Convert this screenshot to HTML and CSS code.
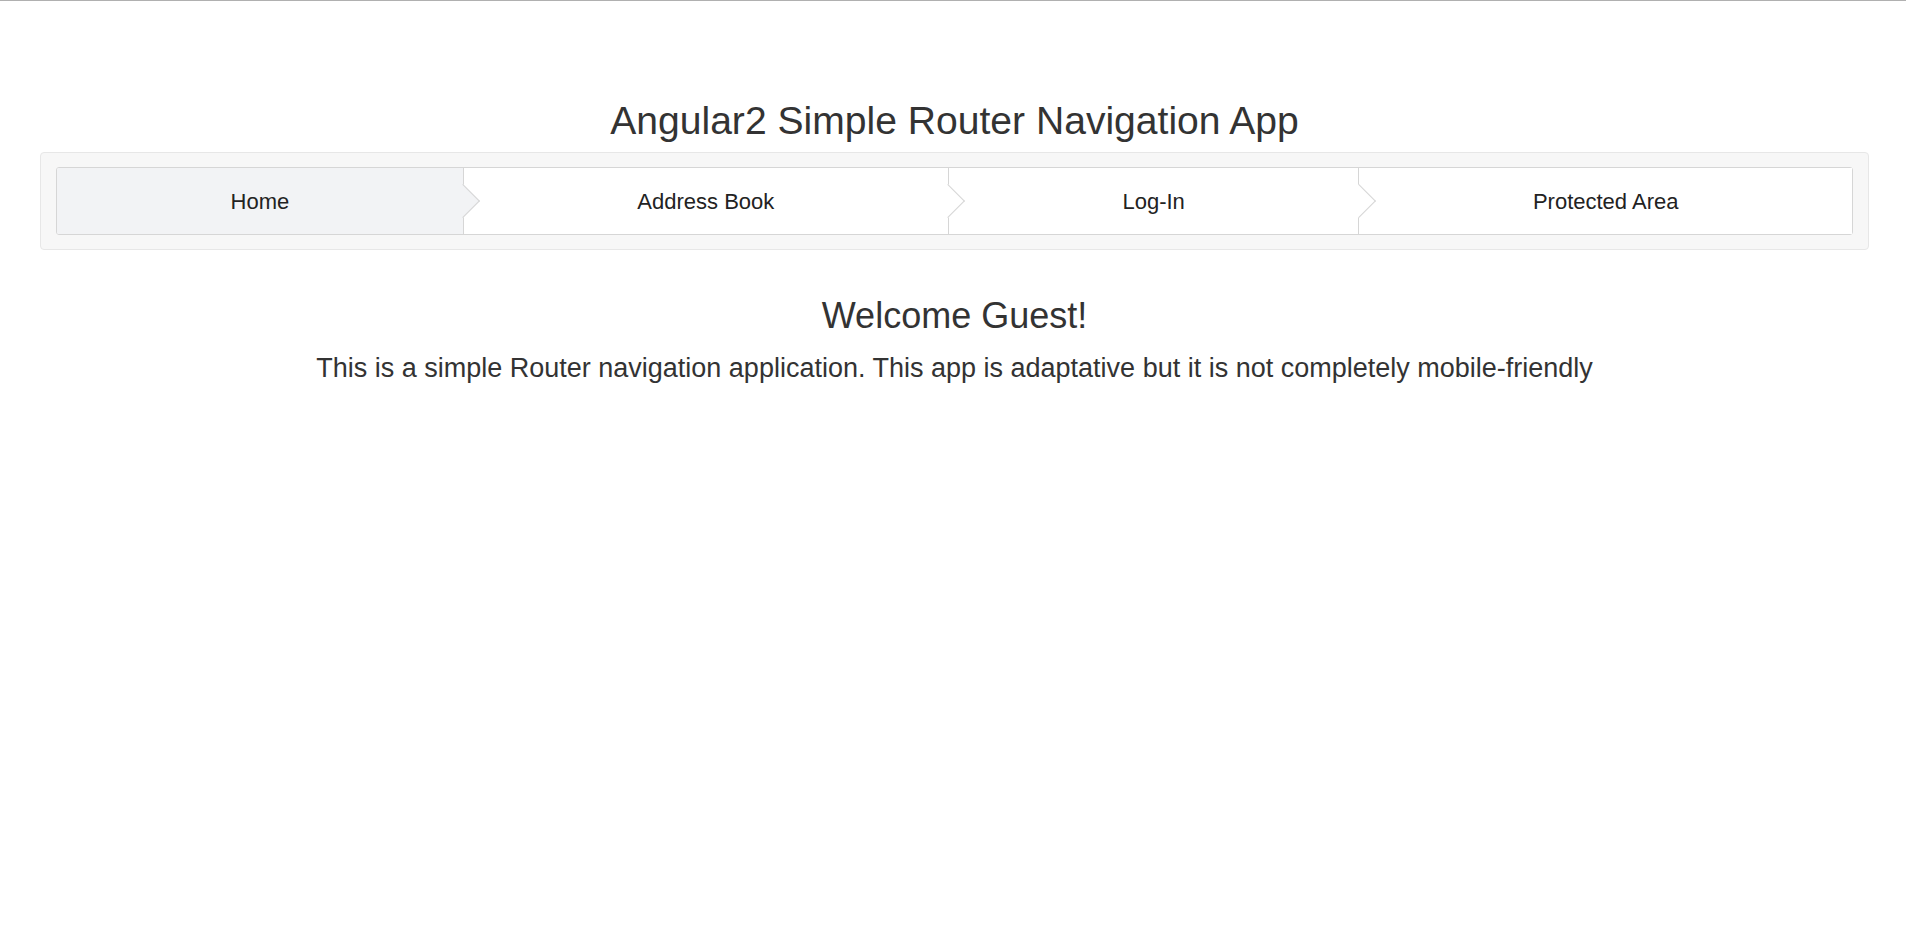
FILE: index.html
```html
<!DOCTYPE html>
<html lang="en">
<head>
<meta charset="utf-8">
<title>Angular2 Simple Router Navigation App</title>
<link rel="stylesheet" href="styles.css">
</head>
<body>
<div class="topline"></div>
<div class="container">
  <h1 class="title">Angular2 Simple Router Navigation App</h1>
  <div class="panel">
    <nav class="steps">
      <a class="step active">Home</a>
      <a class="step">Address Book</a>
      <a class="step">Log-In</a>
      <a class="step last">Protected Area</a>
    </nav>
  </div>
  <h2 class="welcome">Welcome Guest!</h2>
  <p class="intro">This is a simple Router navigation application. This app is adaptative but it is not completely mobile-friendly</p>
</div>
</body>
</html>
```

FILE: styles.css
```css
html, body {
  margin: 0;
  padding: 0;
  background: #ffffff;
}
body {
  font-family: "Liberation Sans", Arial, Helvetica, sans-serif;
  color: #333333;
}
.topline {
  height: 1px;
  background: #b0b0b0;
}
.container {
  margin: 0 37px 0 40px;
}
.title {
  margin: 98px 0 10px;
  font-size: 39.1px;
  font-weight: 400;
  line-height: 1.1;
  text-align: center;
  color: #333333;
}
.panel {
  background: #f7f7f7;
  border: 1px solid #e7e7e7;
  border-radius: 4px;
  padding: 14px 15px;
}
.steps {
  display: flex;
  background: #ffffff;
  border: 1px solid #d6d6d6;
  border-radius: 3px;
  height: 66px;
}
.step {
  position: relative;
  flex: 1 1 auto;
  display: flex;
  align-items: center;
  justify-content: center;
  padding-top: 1px;
  font-size: 22px;
  color: #222222;
  background: #ffffff;
  border-right: 1px solid #d6d6d6;
  text-decoration: none;
  cursor: pointer;
}
.step.active {
  background: #f2f3f5;
  border-radius: 2px 0 0 2px;
}
.step.last {
  border-right: 0;
}
.step::after {
  content: "";
  position: absolute;
  top: 50%;
  right: -12.5px;
  width: 24px;
  height: 24px;
  box-sizing: border-box;
  background: inherit;
  border-top: 1px solid #d6d6d6;
  border-right: 1px solid #d6d6d6;
  transform: translateY(-50%) rotate(45deg);
  z-index: 2;
}
.step.last::after {
  display: none;
}
.welcome {
  margin: 46px 0 13px;
  font-size: 36px;
  font-weight: 400;
  line-height: 1.1;
  text-align: center;
  color: #333333;
}
.intro {
  margin: 0;
  font-size: 27px;
  line-height: 1.42857;
  text-align: center;
  color: #333333;
}
```
